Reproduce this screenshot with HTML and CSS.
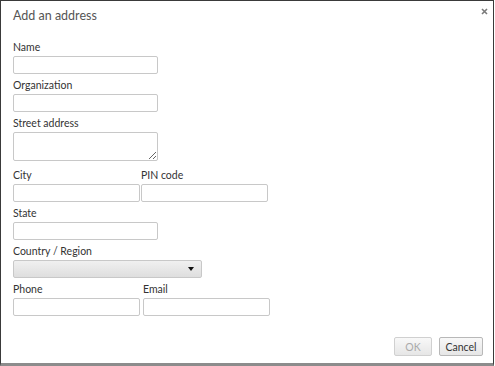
FILE: index.html
```html
<!DOCTYPE html>
<html lang="en">
<head>
    <meta charset="UTF-8">
    <title>Add an address</title>
    <link rel="stylesheet" href="styles.css">
</head>
<body>
    <div class="dialog">
        <div class="dialog-head">
            <h1>Add an address</h1>
            <svg class="close" width="7" height="7" viewBox="0 0 7 7">
                <path d="M1 1L6 6M6 1L1 6" stroke="#7a7a7a" stroke-width="1.6"/>
            </svg>
        </div>

        <form class="address-form">
            <div class="field">
                <label for="name">Name</label>
                <input type="text" id="name" class="wide">
            </div>
            <div class="field">
                <label for="org">Organization</label>
                <input type="text" id="org" class="wide">
            </div>
            <div class="field street">
                <label for="street">Street address</label>
                <textarea id="street" class="wide"></textarea>
            </div>
            <div class="pair">
                <div class="field">
                    <label for="city">City</label>
                    <input type="text" id="city">
                </div>
                <div class="field">
                    <label for="pin">PIN code</label>
                    <input type="text" id="pin">
                </div>
            </div>
            <div class="field">
                <label for="state">State</label>
                <input type="text" id="state" class="wide">
            </div>
            <div class="field country">
                <label for="country">Country / Region</label>
                <div class="select"><span class="arrow"></span></div>
            </div>
            <div class="pair contact">
                <div class="field">
                    <label for="phone">Phone</label>
                    <input type="text" id="phone">
                </div>
                <div class="field">
                    <label for="email">Email</label>
                    <input type="text" id="email">
                </div>
            </div>
        </form>

        <div class="dialog-foot">
            <button type="button" class="btn" disabled>OK</button>
            <button type="button" class="btn">Cancel</button>
        </div>
    </div>
</body>
</html>
```

FILE: styles.css
```css
body {
    margin: 0;
    padding: 0;
    background-color: #fff;
    font-family: 'Lato', 'DejaVu Sans', sans-serif;
    color: #333;
}

/* Dialog frame */
.dialog {
    width: 494px;
    height: 366px;
    box-sizing: border-box;
    border: 1px solid #3a3a3a;
    border-bottom: 3px solid #8c8c8c;
    display: flex;
    flex-direction: column;
}

.dialog-head {
    display: flex;
    justify-content: space-between;
    align-items: flex-start;
    padding: 6px 5px 0 12px;
}

.dialog-head h1 {
    margin: 0;
    font-size: 12.5px;
    font-weight: normal;
    line-height: 18px;
    color: #555;
}

.close {
    display: block;
    margin-top: 1px;
}

/* Form */
.address-form {
    padding: 15px 0 0 12px;
}

.field {
    margin-bottom: 4px;
}

.field label {
    display: block;
    font-size: 10.5px;
    line-height: 14px;
    margin-bottom: 2px;
}

.field input,
.field textarea {
    display: block;
    width: 127px;
    height: 18px;
    box-sizing: border-box;
    margin: 0;
    border: 1px solid #c8c8c8;
    border-radius: 2px;
    background: #fff;
}

.field .wide {
    width: 145px;
}

.field textarea {
    height: 29px;
    resize: vertical;
}

.street {
    margin-bottom: 7px;
}

.pair {
    display: grid;
    grid-template-columns: 127px 127px;
    column-gap: 1px;
}

.contact {
    column-gap: 3px;
}

.select {
    position: relative;
    width: 189px;
    height: 18px;
    box-sizing: border-box;
    border: 1px solid #c8c8c8;
    border-radius: 2px;
    background: linear-gradient(#f0f0f0, #dedede);
}

.arrow {
    position: absolute;
    right: 7px;
    top: 6px;
    border-left: 3px solid transparent;
    border-right: 3px solid transparent;
    border-top: 4px solid #111;
}

/* Footer buttons */
.dialog-foot {
    margin-top: auto;
    display: flex;
    justify-content: flex-end;
    gap: 7px;
    padding: 0 10px 7px 0;
}

.btn {
    height: 19px;
    padding: 0;
    font-family: 'Lato', 'DejaVu Sans', sans-serif;
    font-size: 10.5px;
    color: #333;
    border: 1px solid #b8b8b8;
    border-radius: 2px;
    background: linear-gradient(#f8f8f8, #e6e6e6);
    width: 44px;
}

.btn:disabled {
    width: 38px;
    color: #aaa;
    border-color: #d0d0d0;
}
```
